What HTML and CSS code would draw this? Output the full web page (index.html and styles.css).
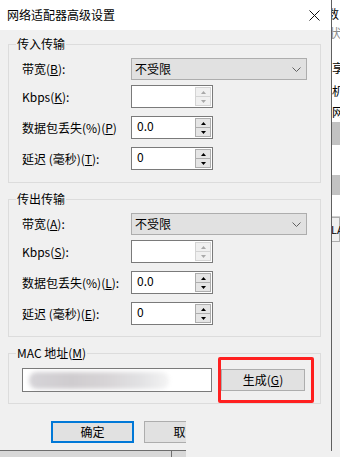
FILE: index.html
```html
<!DOCTYPE html>
<html>
<head>
<title>网络适配器高级设置</title>
<link rel="stylesheet" href="styles.css">
</head>
<body>
<div class="desk">
  <div class="dialog">
    <div class="titlebar">
      <span class="title">网络适配器高级设置</span>
      <svg class="close" width="11" height="11" viewBox="0 0 11 11"><path d="M0.5 0.5L10.5 10.5M10.5 0.5L0.5 10.5" stroke="#111" stroke-width="1" fill="none"/></svg>
    </div>
    <div class="body">
      <fieldset class="group">
        <legend>传入传输</legend>
        <div class="row row-select">
          <label>带宽(<u>B</u>):</label>
          <div class="select"><span>不受限</span><svg width="9" height="5" viewBox="0 0 9 5"><path d="M0.5 0.5L4.5 4.5L8.5 0.5" stroke="#606060" fill="none"/></svg></div>
        </div>
        <div class="row">
          <label>Kbps(<u>K</u>):</label>
          <div class="spin"><span class="spin-val"></span><span class="spin-btns off"><i><svg width="5" height="3"><path d="M0 3L2.5 0L5 3Z"/></svg></i><i><svg width="5" height="3"><path d="M0 0L2.5 3L5 0Z"/></svg></i></span></div>
        </div>
        <div class="row">
          <label>数据包丢失(%)(<u>P</u>)</label>
          <div class="spin"><span class="spin-val">0.0</span><span class="spin-btns"><i><svg width="5" height="3"><path d="M0 3L2.5 0L5 3Z"/></svg></i><i><svg width="5" height="3"><path d="M0 0L2.5 3L5 0Z"/></svg></i></span></div>
        </div>
        <div class="row">
          <label>延迟 (毫秒)(<u>T</u>):</label>
          <div class="spin"><span class="spin-val">0</span><span class="spin-btns"><i><svg width="5" height="3"><path d="M0 3L2.5 0L5 3Z"/></svg></i><i><svg width="5" height="3"><path d="M0 0L2.5 3L5 0Z"/></svg></i></span></div>
        </div>
      </fieldset>

      <fieldset class="group">
        <legend>传出传输</legend>
        <div class="row row-select">
          <label>带宽(<u>A</u>):</label>
          <div class="select"><span>不受限</span><svg width="9" height="5" viewBox="0 0 9 5"><path d="M0.5 0.5L4.5 4.5L8.5 0.5" stroke="#606060" fill="none"/></svg></div>
        </div>
        <div class="row">
          <label>Kbps(<u>S</u>):</label>
          <div class="spin"><span class="spin-val"></span><span class="spin-btns off"><i><svg width="5" height="3"><path d="M0 3L2.5 0L5 3Z"/></svg></i><i><svg width="5" height="3"><path d="M0 0L2.5 3L5 0Z"/></svg></i></span></div>
        </div>
        <div class="row">
          <label>数据包丢失(%)(<u>L</u>):</label>
          <div class="spin"><span class="spin-val">0.0</span><span class="spin-btns"><i><svg width="5" height="3"><path d="M0 3L2.5 0L5 3Z"/></svg></i><i><svg width="5" height="3"><path d="M0 0L2.5 3L5 0Z"/></svg></i></span></div>
        </div>
        <div class="row">
          <label>延迟 (毫秒)(<u>E</u>):</label>
          <div class="spin"><span class="spin-val">0</span><span class="spin-btns"><i><svg width="5" height="3"><path d="M0 3L2.5 0L5 3Z"/></svg></i><i><svg width="5" height="3"><path d="M0 0L2.5 3L5 0Z"/></svg></i></span></div>
        </div>
      </fieldset>

      <fieldset class="group group-mac">
        <legend>MAC 地址(<u>M</u>)</legend>
        <div class="mac-row">
          <div class="mac-input"><div class="mac-blur"></div></div>
          <div class="btn btn-gen">生成(<u>G</u>)<span class="mark"></span></div>
        </div>
      </fieldset>
    </div>
    <div class="footer">
      <div class="btn btn-ok">确定</div>
      <div class="btn">取消</div>
    </div>
  </div>
  <div class="behind">
    <span class="bg-line l1">数</span>
    <span class="bg-line l2">状</span>
    <span class="bg-line l3">享</span>
    <span class="bg-line l4">机</span>
    <span class="bg-line l5">网</span>
    <span class="bg-band b1"></span>
    <span class="bg-gap g1"></span>
    <span class="bg-band b2"></span>
    <span class="bg-gap g2"></span>
    <span class="bg-box">LAN</span>
    <span class="bg-rest"></span>
  </div>
</div>
<div class="under"><div class="under-left"></div></div>
<div class="cover"></div>
</body>
</html>
```

FILE: styles.css
```css
body {
    margin: 0;
    width: 340px;
    height: 457px;
    overflow: hidden;
    position: relative;
    background: #f0f0f0;
    color: #000;
    font-family: "Noto Sans CJK SC", "Microsoft YaHei", sans-serif;
    font-size: 12px;
    line-height: 16px;
}

.desk {
    display: flex;
    height: 451px;
}

.dialog {
    width: 331px;
    height: 450px;
    flex: none;
    display: flex;
    flex-direction: column;
    background: #f0f0f0;
    border-right: 1px solid #5f5f5f;
    border-bottom: 1px solid #6d6d6d;
}

.titlebar {
    height: 30px;
    flex: none;
    background: #fff;
    display: flex;
    align-items: center;
    justify-content: space-between;
    padding: 0 11px 0 7px;
}

.body {
    padding: 6px 10px 0 8px;
}

.group {
    margin: 0;
    min-width: 0;
    padding: 6px 12px 12px 13px;
    border: 1px solid #dcdcdc;
}
.group + .group {
    margin-top: 8px;
}
.group:nth-child(2) {
    padding-bottom: 11px;
}
.group legend {
    margin-left: -6px;
    padding: 0 1px;
    line-height: 16px;
}

.row {
    display: flex;
    align-items: center;
    height: 23px;
    margin-top: 8px;
}
.row-select {
    height: 22px;
    margin-top: 0;
}
.row-select + .row {
    margin-top: 5px;
}
.row label {
    width: 109px;
    flex: none;
    white-space: nowrap;
}

.select {
    width: 176px;
    height: 22px;
    box-sizing: border-box;
    border: 1px solid #adadad;
    background: #e1e1e1;
    display: flex;
    align-items: center;
    justify-content: space-between;
    padding: 0 5px 0 3px;
}

.spin {
    width: 82px;
    height: 23px;
    box-sizing: border-box;
    border: 1px solid #7a7a7a;
    background: #fff;
    display: flex;
}
.spin-val {
    flex: 1;
    padding: 1px 0 0 5px;
}
.spin-btns {
    width: 17px;
    box-sizing: border-box;
    padding: 1px 1px 1px 0;
    display: flex;
    flex-direction: column;
}
.spin-btns i {
    flex: 1;
    display: flex;
    align-items: center;
    justify-content: center;
    border: 1px solid #adadad;
    background: #e5e5e5;
    fill: #000;
}
.spin-btns i + i {
    margin-top: -1px;
}
.spin-btns.off i {
    border-color: #d4d4d4;
    background: #f0f0f0;
    fill: #a8a8a8;
}

.group-mac {
    padding: 7px 12px 11px 13px;
}
.mac-row {
    display: flex;
    align-items: center;
    height: 24px;
}
.mac-input {
    width: 190px;
    height: 24px;
    box-sizing: border-box;
    border: 1px solid #7a7a7a;
    background: #fff;
    overflow: hidden;
    display: flex;
    align-items: center;
}
.mac-blur {
    width: 140px;
    height: 17px;
    margin-left: 6px;
    border-radius: 8px;
    background: linear-gradient(90deg, #d6d4d8 0%, #cfcccf 30%, #d7d4d6 55%, #e2e2e4 80%, #f4f4f4 100%);
    filter: blur(2px);
}

.btn {
    width: 83px;
    height: 22px;
    box-sizing: border-box;
    border: 1px solid #adadad;
    background: #e1e1e1;
    display: flex;
    align-items: center;
    justify-content: center;
    flex: none;
}
.btn-gen {
    width: 84px;
    margin-left: 9px;
    position: relative;
}
.mark {
    position: absolute;
    top: -13px;
    bottom: -13px;
    left: -4px;
    right: -10px;
    border: 3px solid #ff2020;
    border-radius: 2px;
}
.btn-ok {
    border: 2px solid #0078d7;
}

.footer {
    display: flex;
    gap: 10px;
    padding: 17px 0 0 51px;
}

.behind {
    flex: 1;
    display: flex;
    flex-direction: column;
    overflow: hidden;
    background: #fff;
    white-space: nowrap;
}
.bg-line {
    height: 23px;
    line-height: 23px;
}
.l1 {
    height: 25px;
    line-height: 28px;
    margin-left: -5px;
}
.l2 {
    height: 31px;
    line-height: 16px;
    color: #8a8a8a;
    margin-left: -3px;
}
.l3, .l4, .l5 {
    margin-left: 0;
}
.l5 {
    height: 20px;
    line-height: 20px;
}
.bg-band {
    background: #c2c2c2;
}
.b1 {
    height: 23px;
}
.b2 {
    height: 20px;
}
.g1 {
    height: 30px;
}
.g2 {
    height: 22px;
    border-bottom: 1px solid #d0d0d0;
    box-sizing: border-box;
}
.bg-box {
    height: 23px;
    line-height: 23px;
    margin-left: -2px;
    border: 1px solid #adadad;
    background: #f0f0f0;
    font-size: 11px;
}
.bg-rest {
    flex: 1;
    background: #f0f0f0;
}

.under {
    height: 6px;
    background: #f0f0f0;
}
.under-left {
    width: 186px;
    height: 6px;
    background: linear-gradient(90deg, #d8d8d8 171px, #6f6f6f 171px, #6f6f6f 172px, #d8d8d8 172px);
}

.cover {
    position: absolute;
    left: 186px;
    top: 418px;
    width: 145px;
    height: 39px;
    background: #f0f0f0;
}
```
